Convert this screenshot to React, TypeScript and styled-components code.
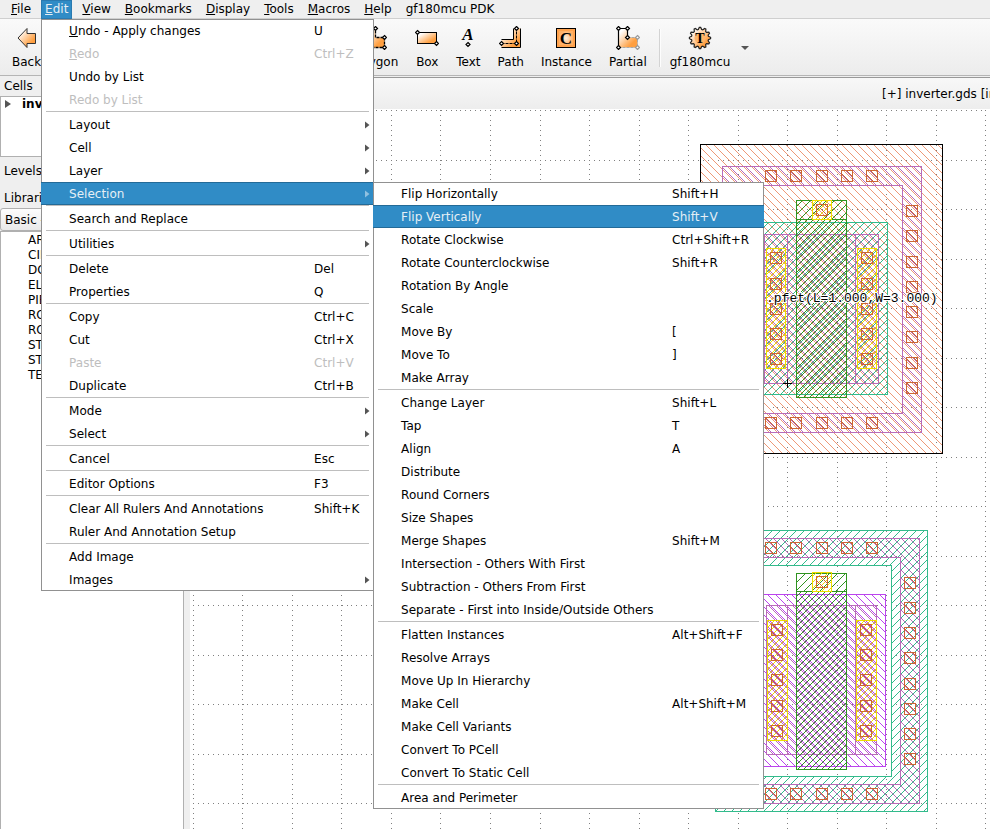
import React from "react";
import styled, { createGlobalStyle, css } from "styled-components";

const GlobalStyle = createGlobalStyle`
  * { box-sizing: border-box; }
  html, body { margin: 0; padding: 0; }
  body, button, select {
    font-family: "DejaVu Sans", sans-serif;
    font-size: 12px;
    line-height: 15px;
    color: #000;
  }
`;

const Shell = styled.div`
  display: flex;
  flex-direction: column;
  height: 100vh;
  overflow: hidden;
  background: #efefef;
`;

const MenuBar = styled.nav`
  display: flex;
  flex: none;
  gap: 6px;
  height: 19px;
  padding-left: 7px;
  background: #efefef;
  box-shadow: inset 0 -1px #cfcfcf;
`;

const MenuEntry = styled.div`
  position: relative;
`;

const MenuTitle = styled.button<{ $open?: boolean }>`
  display: block;
  height: 19px;
  padding: 0 4px 1px;
  border: 0;
  background: none;
  white-space: nowrap;
  ${(p) =>
    p.$open &&
    css`
      background: #308cc6;
      box-shadow: inset 0 0 0 1px #2a7ab0;
      color: #e6eff5;
    `}
`;

const Popup = styled.div<{ $sub?: boolean }>`
  position: absolute;
  z-index: 10;
  top: ${(p) => (p.$sub ? "0" : "100%")};
  left: ${(p) => (p.$sub ? "332px" : "0")};
  width: ${(p) => (p.$sub ? "391px" : "333px")};
  background: #fff;
  box-shadow: inset 0 0 0 1px #919191;
`;

const Row = styled.div`
  position: relative;
`;

const Item = styled.button<{ $active?: boolean; $keyColumn: number }>`
  display: grid;
  grid-template-columns: ${(p) => p.$keyColumn}px 1fr auto;
  align-items: center;
  width: 100%;
  height: 23px;
  padding: 2px 4px 0 28px;
  border: 0;
  background: none;
  text-align: left;
  white-space: nowrap;
  svg {
    margin-bottom: 2px;
  }
  &:disabled {
    color: #bebebe;
  }
  ${(p) =>
    p.$active &&
    css`
      background: #308cc6;
      box-shadow: inset 0 1px #236a97, inset 0 -1px #236a97;
      color: #e6eff5;
    `}
`;

const Divider = styled.hr`
  height: 1px;
  margin: 0 5px 1px;
  border: 0;
  background: #bebebe;
`;

const ToolBar = styled.div`
  display: flex;
  flex: none;
  align-items: flex-start;
  gap: 1px;
  height: 57px;
  padding-left: 4px;
  border-bottom: 1px solid #b5b5b5;
  background: linear-gradient(#fafafa, #ececec);
`;

const ToolButton = styled.button`
  display: flex;
  flex: none;
  flex-direction: column;
  align-items: center;
  gap: 5px;
  padding: 7px 8px 0;
  border: 0;
  background: none;
  white-space: nowrap;
`;

const ToolGap = styled.div`
  flex: 0 0 292px;
`;

const ToolSeparator = styled.div`
  flex: none;
  width: 2px;
  height: 38px;
  margin: 10px 0 0 3px;
  border-left: 1px solid #d3d3d3;
  border-right: 1px solid #fdfdfd;
`;

const DropButton = styled.button`
  flex: none;
  width: 12px;
  height: 56px;
  padding: 0 0 2px;
  border: 0;
  background: none;
`;

const Work = styled.div`
  display: flex;
  flex: 1;
  min-height: 0;
`;

const Side = styled.aside`
  display: flex;
  flex: none;
  flex-direction: column;
  width: 184px;
`;

const PanelTitle = styled.label<{ $height: number; $top?: number }>`
  flex: none;
  height: ${(p) => p.$height}px;
  padding: ${(p) => p.$top ?? 3}px 4px 0;
`;

const CellTree = styled.div`
  display: flex;
  flex: none;
  align-items: flex-start;
  gap: 11px;
  height: 61px;
  padding-left: 4px;
  border: 1px solid #b0b0b0;
  background: #fff;
  font-weight: bold;
`;

const LibrarySelect = styled.select`
  flex: none;
  height: 23px;
  padding: 0;
  border: 1px solid #b0b0b0;
  border-radius: 3px;
  background: linear-gradient(#fdfdfd, #e9e9e9);
`;

const LibraryList = styled.ul`
  flex: 1;
  min-height: 0;
  margin: 0;
  padding: 1px 0 0 27px;
  border: 1px solid #b0b0b0;
  border-bottom: 0;
  background: #fff;
  list-style: none;
`;

const View = styled.main`
  display: flex;
  flex: 1;
  flex-direction: column;
  min-width: 0;
  padding-top: 1px;
`;

const TabStrip = styled.div`
  display: flex;
  flex: none;
  justify-content: flex-end;
  height: 32px;
  border-top: 1px solid #999;
  background: linear-gradient(#f8f8f8, #ededed);
`;

const Tab = styled.button`
  width: 108px;
  padding: 2px 0 0;
  border: 0;
  background: none;
  overflow: hidden;
  text-align: left;
  white-space: nowrap;
`;

const Canvas = styled.div`
  flex: 1;
  min-height: 0;
  margin-left: 6px;
  overflow: hidden;
  background: #fff;
  svg {
    display: block;
  }
`;

/* ---------- menus ---------- */

type Entry = "-" | { t: string; k?: string; off?: boolean; sub?: boolean; on?: boolean; u?: boolean };

const editMenu: Entry[] = [
  { t: "Undo - Apply changes", k: "U", u: true },
  { t: "Redo", k: "Ctrl+Z", off: true, u: true },
  { t: "Undo by List" },
  { t: "Redo by List", off: true },
  "-",
  { t: "Layout", sub: true },
  { t: "Cell", sub: true },
  { t: "Layer", sub: true },
  { t: "Selection", sub: true, on: true },
  "-",
  { t: "Search and Replace" },
  "-",
  { t: "Utilities", sub: true },
  "-",
  { t: "Delete", k: "Del" },
  { t: "Properties", k: "Q" },
  "-",
  { t: "Copy", k: "Ctrl+C" },
  { t: "Cut", k: "Ctrl+X" },
  { t: "Paste", k: "Ctrl+V", off: true },
  { t: "Duplicate", k: "Ctrl+B" },
  "-",
  { t: "Mode", sub: true },
  { t: "Select", sub: true },
  "-",
  { t: "Cancel", k: "Esc" },
  "-",
  { t: "Editor Options", k: "F3" },
  "-",
  { t: "Clear All Rulers And Annotations", k: "Shift+K" },
  { t: "Ruler And Annotation Setup" },
  "-",
  { t: "Add Image" },
  { t: "Images", sub: true },
];

const selectionMenu: Entry[] = [
  { t: "Flip Horizontally", k: "Shift+H" },
  { t: "Flip Vertically", k: "Shift+V", on: true },
  { t: "Rotate Clockwise", k: "Ctrl+Shift+R" },
  { t: "Rotate Counterclockwise", k: "Shift+R" },
  { t: "Rotation By Angle" },
  { t: "Scale" },
  { t: "Move By", k: "[" },
  { t: "Move To", k: "]" },
  { t: "Make Array" },
  "-",
  { t: "Change Layer", k: "Shift+L" },
  { t: "Tap", k: "T" },
  { t: "Align", k: "A" },
  { t: "Distribute" },
  { t: "Round Corners" },
  { t: "Size Shapes" },
  { t: "Merge Shapes", k: "Shift+M" },
  { t: "Intersection - Others With First" },
  { t: "Subtraction - Others From First" },
  { t: "Separate - First into Inside/Outside Others" },
  "-",
  { t: "Flatten Instances", k: "Alt+Shift+F" },
  { t: "Resolve Arrays" },
  { t: "Move Up In Hierarchy" },
  { t: "Make Cell", k: "Alt+Shift+M" },
  { t: "Make Cell Variants" },
  { t: "Convert To PCell" },
  { t: "Convert To Static Cell" },
  "-",
  { t: "Area and Perimeter" },
];

const Mnemonic = ({ text }: { text: string }) => (
  <span>
    <u>{text[0]}</u>
    {text.slice(1)}
  </span>
);

const RightArrow = ({ color = "#555" }: { color?: string }) => (
  <svg width="5" height="8" viewBox="0 0 5 8" aria-hidden="true">
    <path d="M0 0.5L4.5 4L0 7.5Z" fill={color} />
  </svg>
);

const Menu = ({ entries, sub }: { entries: Entry[]; sub?: boolean }) => (
  <Popup role="menu" $sub={sub}>
    {entries.map((e, i) =>
      e === "-" ? (
        <Divider key={i} />
      ) : (
        <Row key={i}>
          <Item role="menuitem" disabled={e.off} $active={e.on} $keyColumn={sub ? 271 : 245}>
            {e.u ? <Mnemonic text={e.t} /> : <span>{e.t}</span>}
            <span>{e.k}</span>
            {e.sub && <RightArrow color={e.on ? "#8fc0e0" : "#555"} />}
          </Item>
          {e.sub && e.on && <Menu entries={selectionMenu} sub />}
        </Row>
      )
    )}
  </Popup>
);

/* ---------- toolbar icons ---------- */

const Handle = ({ x, y, c = "#000" }: { x: number; y: number; c?: string }) => (
  <path
    d={`M${x} ${y - 2}L${x + 2} ${y}L${x} ${y + 2}L${x - 2} ${y}Z`}
    fill="#fff"
    stroke={c}
    strokeWidth="1.2"
  />
);

const Icon = ({ children }: { children: React.ReactNode }) => (
  <svg width="24" height="24" viewBox="0 0 24 24" fill="none" aria-hidden="true">
    {children}
  </svg>
);

const HiddenDefs = styled.svg`
  position: absolute;
`;

const IconDefs = () => (
  <HiddenDefs width="0" height="0" aria-hidden="true">
    <defs>
      <linearGradient id="amber" x1="0" y1="0" x2="1" y2="1">
        <stop offset="0.15" stopColor="#fff" />
        <stop offset="0.75" stopColor="#ff9f40" />
      </linearGradient>
      <radialGradient id="glow">
        <stop offset="0" stopColor="#ffeedd" />
        <stop offset="1" stopColor="#ffb066" />
      </radialGradient>
    </defs>
  </HiddenDefs>
);

const BackIcon = () => (
  <Icon>
    <path d="M3 12L12 2.5V7.5H20.5V17.5H12V21.5Z" fill="url(#amber)" stroke="#333" />
  </Icon>
);

const PolygonIcon = () => (
  <Icon>
    <path d="M2.5 2.5H12.5V11.5H21.5V21.5H2.5Z" fill="url(#amber)" stroke="#000" strokeWidth="1.3" strokeDasharray="3 1" />
    <Handle x={2.5} y={2.5} />
    <Handle x={12.5} y={2.5} />
    <Handle x={21.5} y={11.5} />
    <Handle x={21.5} y={21.5} />
  </Icon>
);

const BoxIcon = () => (
  <Icon>
    <rect x="2.5" y="6.5" width="19" height="11" fill="url(#amber)" stroke="#000" />
    <Handle x={2.5} y={6.5} />
    <Handle x={21.5} y={17.5} />
  </Icon>
);

const TextIcon = () => (
  <Icon>
    <text x="12" y="14" textAnchor="middle" fontFamily="Liberation Serif, serif" fontSize="17" fontWeight="bold" fontStyle="italic" fill="#000">
      A
    </text>
    <Handle x={12} y={18.5} />
  </Icon>
);

const PathIcon = () => (
  <Icon>
    <path d="M14.5 2.5V13.5H2.5V21.5H21.5V2.5Z" fill="url(#amber)" />
    <path d="M14.5 2.5V13.5H2.5M2.5 21.5H21.5V2.5" stroke="#000" />
    <path d="M2.5 17.5H17.5V2.5" stroke="#000" strokeDasharray="3 1" />
    <Handle x={2.5} y={17.5} />
    <Handle x={17.5} y={17.5} />
    <Handle x={17.5} y={2.5} />
  </Icon>
);

const InstanceIcon = () => (
  <Icon>
    <rect x="2.5" y="2.5" width="19" height="19" fill="#ffa24d" stroke="#000" />
    <rect x="5" y="5" width="14" height="14" fill="url(#glow)" />
    <text x="12" y="17.5" textAnchor="middle" fontFamily="Liberation Serif, serif" fontSize="17" fontWeight="bold" fill="#000">
      C
    </text>
  </Icon>
);

const PartialIcon = () => (
  <Icon>
    <path d="M2.5 2.5H11.5V11.5H21.5V21.5H2.5Z" fill="url(#amber)" />
    <path d="M11.5 11.5V2.5H2.5V21.5" stroke="#000" strokeWidth="1.2" />
    <path d="M11.5 11.5H21.5V21.5H2.5" stroke="#aaa" strokeDasharray="3 1" />
    <Handle x={2.5} y={2.5} />
    <Handle x={11.5} y={2.5} />
    <Handle x={11.5} y={11.5} />
    <Handle x={2.5} y={21.5} />
    <Handle x={21.5} y={11.5} c="#999" />
    <Handle x={21.5} y={21.5} c="#999" />
  </Icon>
);

const gear = Array.from({ length: 48 }, (_, i) => {
  const r = i % 4 < 2 ? 10.6 : 8.6;
  const a = ((i - 0.5) / 48) * Math.PI * 2;
  return `${(12 + r * Math.cos(a)).toFixed(2)},${(12 + r * Math.sin(a)).toFixed(2)}`;
}).join(" ");

const TechIcon = () => (
  <Icon>
    <polygon points={gear} fill="url(#amber)" stroke="#222" strokeWidth="1.2" />
    <circle cx="12" cy="12" r="5.5" fill="#ffb469" />
    <text x="12" y="16.5" textAnchor="middle" fontFamily="Liberation Serif, serif" fontSize="14" fontWeight="bold" fill="#000">
      T
    </text>
  </Icon>
);

/* ---------- layout drawing ---------- */

const range = (n: number) => Array.from({ length: n }, (_, i) => i);

const gridDots = (() => {
  const x0 = 193;
  const y0 = 110;
  const step = 49.53;
  const fine = step / 10;
  let d = "";
  range(15).forEach((j) =>
    range(162).forEach((i) => {
      d += `M${Math.round(x0 + i * fine)} ${Math.round(y0 + j * step)}h1v1h-1z`;
    })
  );
  range(17).forEach((i) =>
    range(146).forEach((j) => {
      d += `M${Math.round(x0 + i * step - 0.2)} ${Math.round(y0 + j * fine)}h1v1h-1z`;
    })
  );
  return d;
})();

type HatchProps = { id: string; color: string; period: number; rise?: boolean; shift?: number };
const Hatch = ({ id, color, period, rise, shift = 0 }: HatchProps) => (
  <pattern id={id} width={period} height={period} patternUnits="userSpaceOnUse">
    {range(period).map((i) => (
      <rect
        key={i}
        x={(rise ? period - 1 - i + shift : i + shift) % period}
        y={i}
        width="1"
        height="1"
        fill={color}
      />
    ))}
  </pattern>
);

type BoxProps = { x: number; y: number; r: number; b: number; c: string; fill?: string };
const Shape = ({ x, y, r, b, c, fill }: BoxProps) => (
  <rect x={x + 0.5} y={y + 0.5} width={r - x} height={b - y} stroke={c} fill={fill ? `url(#${fill})` : "none"} />
);

type RingProps = BoxProps & { inner: [number, number, number, number] };
const Ring = ({ x, y, r, b, c, fill, inner: [ix, iy, ir, ib] }: RingProps) => (
  <path
    d={`M${x + 0.5} ${y + 0.5}H${r + 0.5}V${b + 0.5}H${x + 0.5}ZM${ix + 0.5} ${iy + 0.5}H${ir + 0.5}V${ib + 0.5}H${ix + 0.5}Z`}
    fillRule="evenodd"
    fill={`url(#${fill})`}
    stroke={c}
  />
);

const Vias = ({ xs, ys }: { xs: number[]; ys: number[] }) => (
  <>
    {xs.flatMap((x) => ys.map((y) => <Shape key={`${x}-${y}`} x={x} y={y} r={x + 11} b={y + 11} c={via} fill="hVia" />))}
  </>
);

const via = "#cc6633";
const mauve = "#b86cb8";
const teal = "#33bb8c";
const green = "#2f9420";
const yellow = "#eedd00";
const violet = "#bb44ee";
const columns = [765, 790, 816, 841, 866];

const LayoutDrawing = () => (
  <svg width="1600" height="1440" viewBox="190 109 1600 1440" shapeRendering="crispEdges" role="img" aria-label="Layout view">
    <defs>
      <Hatch id="hWell" color="#ee9977" period={8} shift={1} />
      <Hatch id="hMauve" color={mauve} period={8} shift={3} />
      <Hatch id="hTeal" color={teal} period={8} rise shift={7} />
      <Hatch id="hGreen" color={green} period={8} rise shift={3} />
      <Hatch id="hGate" color={green} period={6} rise shift={1} />
      <Hatch id="hYellow" color={yellow} period={6} rise shift={3} />
      <Hatch id="hViolet" color={violet} period={8} shift={5} />
      <Hatch id="hVia" color={via} period={8} shift={4} />
    </defs>
    <path d={gridDots} fill="#808080" />

    <Shape x={700} y={144} r={942} b={453} c="#000" fill="hWell" />
    <Ring x={722} y={166} r={921} b={432} inner={[741, 185, 902, 413]} c={mauve} fill="hMauve" />
    <Shape x={755} y={222} r={887} b={394} c={teal} fill="hTeal" />
    <Shape x={764} y={234} r={878} b={383} c={mauve} fill="hMauve" />
    <path d="M787.5 234V383M855.5 234V383" stroke={mauve} />
    <Shape x={796} y={200} r={846} b={219} c={green} fill="hGreen" />
    <Shape x={796} y={219} r={846} b={397} c={green} fill="hGate" />
    <Shape x={812} y={200} r={831} b={219} c={yellow} fill="hYellow" />
    <Shape x={766} y={248} r={785} b={368} c={yellow} fill="hYellow" />
    <Shape x={857} y={248} r={876} b={368} c={yellow} fill="hYellow" />
    <Vias xs={columns} ys={[170, 417]} />
    <Vias xs={[906]} ys={[205, 230, 256, 281, 306, 331, 357, 382]} />
    <Vias xs={[816]} ys={[204]} />
    <Vias xs={[770, 861]} ys={[252, 278, 303, 328, 353]} />
    <path d="M787.5 379V388M783 383.5H792" stroke="#000" />
    <text
      x="766"
      y="302"
      fontFamily="Liberation Mono, monospace"
      fontSize="13"
      fill="#000"
      stroke="#fff"
      strokeWidth="2"
      paintOrder="stroke"
    >
      .pfet(L=1.000,W=3.000)
    </text>

    <Ring x={715} y={530} r={927} b={811} inner={[751, 565, 891, 776]} c={teal} fill="hTeal" />
    <Ring x={724} y={538} r={919} b={803} inner={[742, 557, 900, 784]} c={mauve} fill="hMauve" />
    <Shape x={757} y={594} r={885} b={766} c={violet} fill="hViolet" />
    <Shape x={766} y={605} r={876} b={754} c={mauve} fill="hMauve" />
    <path d="M787.5 605V754M855.5 605V754" stroke={mauve} />
    <Shape x={796} y={573} r={846} b={591} c={green} fill="hGreen" />
    <Shape x={796} y={591} r={846} b={769} c={green} fill="hGate" />
    <Shape x={812} y={572} r={831} b={591} c={yellow} fill="hYellow" />
    <Shape x={767} y={620} r={787} b={740} c={yellow} fill="hYellow" />
    <Shape x={856} y={620} r={876} b={740} c={yellow} fill="hYellow" />
    <Vias xs={columns} ys={[542, 788]} />
    <Vias xs={[904]} ys={[577, 602, 627, 652, 678, 703, 728, 753]} />
    <Vias xs={[816]} ys={[576]} />
    <Vias xs={[771, 860]} ys={[624, 649, 674, 700, 725]} />
  </svg>
);

const titles = ["File", "Edit", "View", "Bookmarks", "Display", "Tools", "Macros", "Help"];
const library = ["ARC", "CIRCLE", "DONUT", "ELLIPSE", "PIE", "ROUND_PATH", "ROUND_POLYGON", "STROKED_BOX", "STROKED_POLYGON", "TEXT"];
const tools: [string, () => React.JSX.Element][] = [
  ["Polygon", PolygonIcon],
  ["Box", BoxIcon],
  ["Text", TextIcon],
  ["Path", PathIcon],
  ["Instance", InstanceIcon],
  ["Partial", PartialIcon],
];

export default function App() {
  return (
    <Shell>
      <GlobalStyle />
      <IconDefs />
      <MenuBar>
        {titles.map((t) => (
          <MenuEntry key={t}>
            <MenuTitle $open={t === "Edit"}>
              <Mnemonic text={t} />
            </MenuTitle>
            {t === "Edit" && <Menu entries={editMenu} />}
          </MenuEntry>
        ))}
        <MenuEntry>
          <MenuTitle>gf180mcu PDK</MenuTitle>
        </MenuEntry>
      </MenuBar>
      <ToolBar>
        <ToolButton>
          <BackIcon />
          Back
        </ToolButton>
        <ToolGap />
        {tools.map(([name, Glyph]) => (
          <ToolButton key={name}>
            <Glyph />
            {name}
          </ToolButton>
        ))}
        <ToolSeparator />
        <ToolButton>
          <TechIcon />
          gf180mcu
        </ToolButton>
        <DropButton aria-label="Choose technology">
          <svg width="8" height="4" viewBox="0 0 8 4" aria-hidden="true">
            <path d="M0 0H8L4 4Z" fill="#555" />
          </svg>
        </DropButton>
      </ToolBar>
      <Work>
        <Side>
          <PanelTitle as="div" $height={20}>Cells</PanelTitle>
          <CellTree>
            <svg width="6" height="15" viewBox="0 0 6 15" aria-hidden="true">
              <path d="M0 3L6 7L0 11Z" fill="#555" />
            </svg>
            inverter
          </CellTree>
          <PanelTitle as="div" $height={27} $top={7}>Levels</PanelTitle>
          <PanelTitle htmlFor="library" $height={24} $top={7}>Libraries</PanelTitle>
          <LibrarySelect id="library">
            <option>Basic - Basic layout objects</option>
          </LibrarySelect>
          <LibraryList>
            {library.map((name) => (
              <li key={name}>{name}</li>
            ))}
          </LibraryList>
        </Side>
        <View>
          <TabStrip>
            <Tab>[+] inverter.gds [inverter]</Tab>
          </TabStrip>
          <Canvas>
            <LayoutDrawing />
          </Canvas>
        </View>
      </Work>
    </Shell>
  );
}
